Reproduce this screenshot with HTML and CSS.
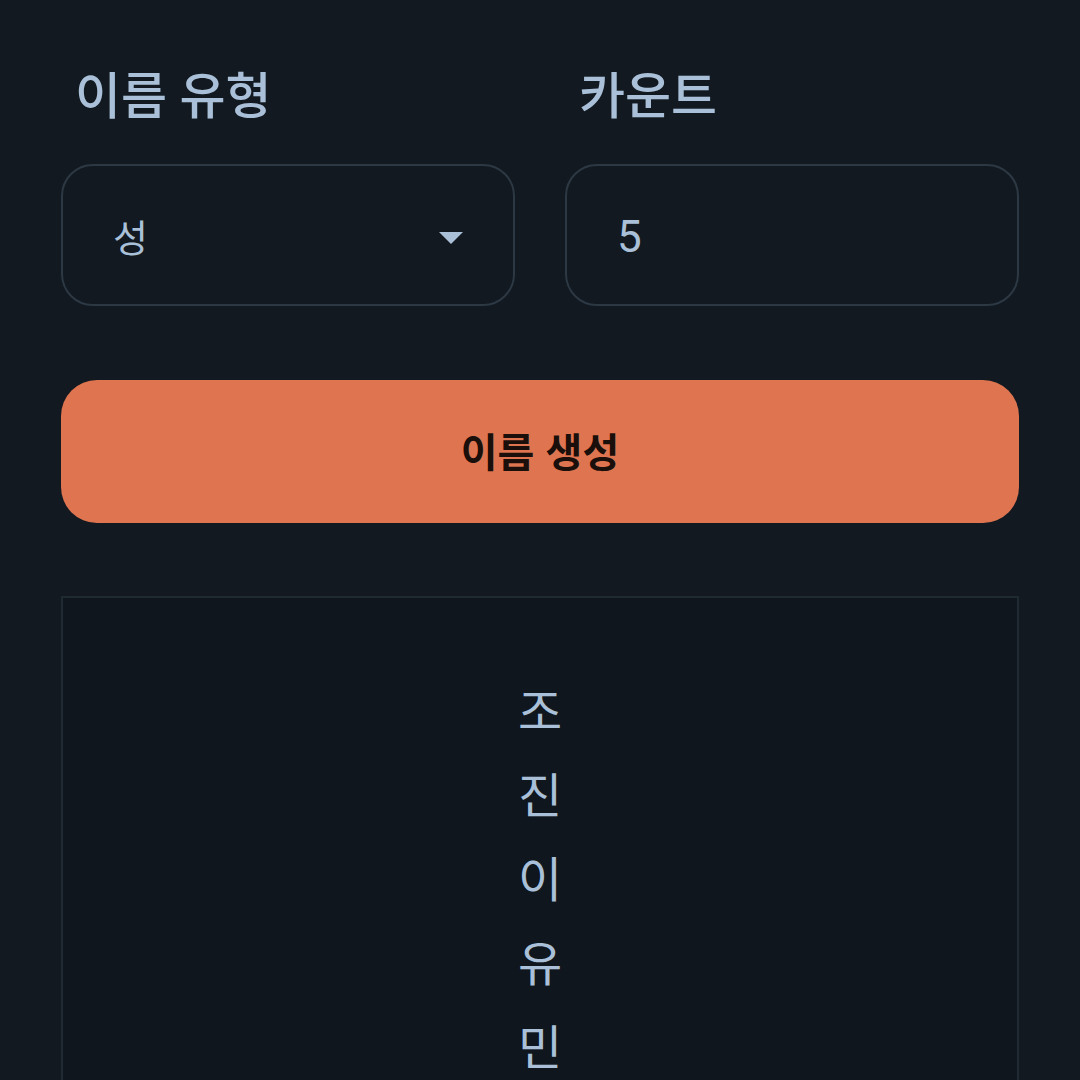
FILE: index.html
```html
<!DOCTYPE html>
<html lang="ko">
<head>
  <meta charset="utf-8">
  <title>이름 생성기</title>
  <link rel="stylesheet" href="styles.css">
</head>
<body>
  <div class="container">
    <div class="fields">
      <div class="field">
        <label class="label">이름 유형</label>
        <div class="box select">
          <span>성</span>
          <svg class="caret" width="24" height="12" viewBox="0 0 24 12"><path d="M0 0 H24 L12 12 Z" fill="#a9c0d8"/></svg>
        </div>
      </div>
      <div class="field">
        <label class="label">카운트</label>
        <div class="box count">
          <span>5</span>
        </div>
      </div>
    </div>

    <button class="btn-generate">이름 생성</button>

    <div class="result">
      <div class="name">조</div>
      <div class="name">진</div>
      <div class="name">이</div>
      <div class="name">유</div>
      <div class="name">민</div>
    </div>
  </div>
</body>
</html>
```

FILE: styles.css
```css
body {
  margin: 0;
  background-color: #121920;
  font-family: Roboto, "Noto Sans CJK KR", sans-serif;
  color: #a9c0d8;
}
.container {
  padding: 69px 61px 0 61px;
}
.fields {
  display: grid;
  grid-template-columns: 1fr 1fr;
  gap: 50px;
}
.field {
  display: flex;
  flex-direction: column;
}
.label {
  font-size: 50px;
  line-height: 56px;
  font-weight: 500;
  padding-left: 14px;
  margin-bottom: 39px;
}
.box {
  height: 142px;
  box-sizing: border-box;
  border: 2px solid #2c3843;
  border-radius: 32px;
  display: flex;
  align-items: center;
  justify-content: space-between;
  padding: 0 50px 0 50px;
  font-size: 38px;
}
.count {
  font-size: 44px;
  padding-top: 4px;
}
.caret {
  display: block;
  margin-top: 6px;
}
.btn-generate {
  display: block;
  width: 100%;
  height: 143px;
  margin-top: 74px;
  border: none;
  border-radius: 36px;
  background-color: #df7550;
  color: #1a0f0a;
  font-family: "Noto Sans CJK KR", sans-serif;
  font-size: 40px;
  font-weight: 700;
  padding-bottom: 4px;
}
.result {
  margin-top: 73px;
  height: 600px;
  border: 2px solid #1e2932;
  background-color: #0f161d;
  padding-top: 73px;
  text-align: center;
}
.name {
  font-size: 48px;
  line-height: 84px;
}
```
